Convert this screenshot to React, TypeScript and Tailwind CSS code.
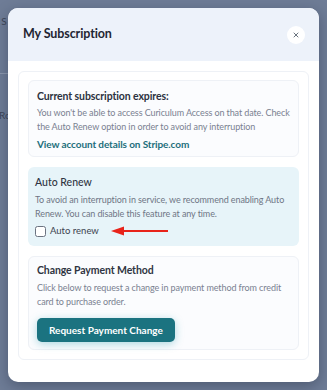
import React from "react";
import { X } from "lucide-react";

const App: React.FC = () => {
  return (
    <div className="relative h-[390px] w-[327px] overflow-hidden bg-[#6e7c96] font-['Lato','Noto_Sans',sans-serif]">
      {/* page behind the overlay */}
      <div className="pt-[14px] text-[10px] text-[#3d4658]">
        <div className="-ml-[4px]">· S</div>
        <div className="mt-[44px] h-px w-[10px] bg-[#8b97ad]" />
        <div className="mt-[34px] -ml-px">Rc</div>
      </div>

      <div className="absolute left-[8px] top-[8px] w-[311px] h-[374px] rounded-[10px] bg-white shadow-[0_4px_14px_rgba(20,30,50,0.35)] overflow-hidden flex flex-col">
        <div className="h-[53px] shrink-0 bg-[#edf2fa] flex items-center justify-between pl-[15px] pr-[14px]">
          <h1 className="text-[12.5px] font-bold text-[#1f2633] tracking-[-0.1px]">
            My Subscription
          </h1>
          <button className="h-[18px] w-[18px] rounded-full bg-white flex items-center justify-center">
            <X className="h-[8px] w-[8px] text-[#4b5563]" strokeWidth={2.5} />
          </button>
        </div>

        <div className="px-[10px] pt-[10px]">
          <div className="rounded-[6px] border border-[#eef1f6] px-[9px] pt-[8px] pb-[9px] flex flex-col gap-[10px]">
            <div className="rounded-[6px] border border-[#eef1f6] bg-[#fbfcfe] px-[8px] pt-[8px] pb-[5px]">
              <h2 className="text-[10.5px] font-bold text-[#2b3240] leading-[14px] tracking-[-0.1px]">
                Current subscription expires:
              </h2>
              <p className="mt-[3px] text-[9px] leading-[14px] text-[#7a8191] tracking-[-0.1px]">
                You won't be able to access Curiculum Access on that date. Check
                the Auto Renew option in order to avoid any interruption
              </p>
              <a className="mt-[3px] block text-[10px] font-bold leading-[14px] text-[#1d6f7c] tracking-[-0.1px]">
                View account details on Stripe.com
              </a>
            </div>

            <div className="rounded-[6px] bg-[#e7f4f9] px-[7px] pt-[8px] pb-[8px]">
              <h2 className="text-[10.5px] font-medium text-[#2f3542] leading-[14px]">
                Auto Renew
              </h2>
              <p className="mt-[4px] text-[9px] leading-[14px] text-[#6f7685] tracking-[-0.1px]">
                To avoid an interruption in service, we recommend enabling Auto
                Renew. You can disable this feature at any time.
              </p>
              <div className="mt-[3px] h-[14px] flex items-center">
                <span className="h-[11px] w-[11px] rounded-[2.5px] border border-[#6b7280] bg-white" />
                <span className="ml-[4px] text-[9.5px] text-[#3c4350]">
                  Auto renew
                </span>
                <svg
                  className="ml-[12px]"
                  width="58"
                  height="10"
                  viewBox="0 0 58 10"
                >
                  <line
                    x1="10"
                    y1="5"
                    x2="57"
                    y2="5"
                    stroke="#e8231a"
                    strokeWidth="2"
                  />
                  <polygon points="0,5 13,0.5 13,9.5" fill="#e8231a" />
                </svg>
              </div>
            </div>

            <div className="rounded-[6px] border border-[#eef1f6] bg-[#fbfcfe] px-[8px] pt-[6px] pb-[7px]">
              <h2 className="text-[10.5px] font-bold text-[#2f3542] leading-[14px] tracking-[-0.1px]">
                Change Payment Method
              </h2>
              <p className="mt-[4px] text-[9px] leading-[14px] text-[#7a8191] tracking-[-0.1px]">
                Click below to request a change in payment method from credit
                card to purchase order.
              </p>
              <button className="mt-[9px] h-[24px] px-[12px] rounded-[5px] bg-[#1b7380] text-white text-[10px] font-bold shadow-[0_2px_8px_rgba(27,150,170,0.35)]">
                Request Payment Change
              </button>
            </div>
          </div>
        </div>
      </div>
    </div>
  );
};

export default App;
